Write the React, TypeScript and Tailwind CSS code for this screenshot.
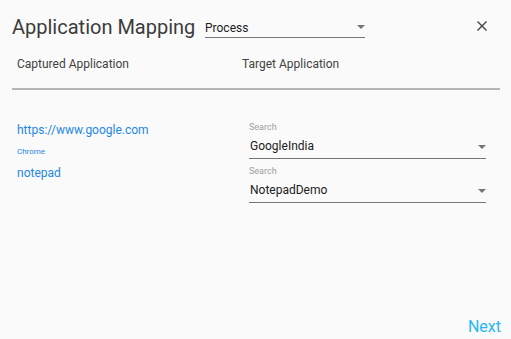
import React from "react";

function Caret() {
  return (
    <svg width="8" height="4" viewBox="0 0 8 4" className="block">
      <path d="M0 0h8L4 4z" fill="#757575" />
    </svg>
  );
}

function SearchField({ value }: { value: string }) {
  return (
    <div className="flex flex-col">
      <span className="text-[9px] leading-none h-[9px] text-[#9e9e9e]">Search</span>
      <div className="mt-[8px] pb-[6px] border-b border-[#757575] flex items-center justify-between pl-px">
        <span className="text-[12px] leading-none h-[12px] text-[#212121]">{value}</span>
        <span className="mt-[1px]">
          <Caret />
        </span>
      </div>
    </div>
  );
}

export default function App() {
  // mapping rows: captured on the left, dropdown target on the right
  const rows = [
    { url: "https://www.google.com", browser: "Chrome", target: "GoogleIndia" },
    { url: "notepad", browser: "", target: "NotepadDemo" },
  ];

  return (
    <div
      className="w-[511px] h-[339px] bg-[#fafafa] flex flex-col overflow-hidden"
      style={{ fontFamily: "Roboto, 'Noto Sans', sans-serif" }}
    >
      <div className="flex items-start pl-3 pt-[17px]">
        <div className="w-[193px] text-[20px] leading-none h-[20px] text-[#3c3c3c]">
          Application Mapping
        </div>
        <div className="mt-[5px] w-[160px] h-[16px] border-b border-[#757575] flex items-start justify-between">
          <span className="text-[12px] leading-none text-[#212121]">Process</span>
          <span className="mt-[3px]">
            <Caret />
          </span>
        </div>
        <button className="ml-[111px] mt-[3px] w-[12px] h-[12px] flex items-center justify-center">
          <svg width="10" height="10" viewBox="0 0 10 10">
            <path d="M0.5 0.5L9.5 9.5M9.5 0.5L0.5 9.5" stroke="#424242" strokeWidth="1.4" />
          </svg>
        </button>
      </div>

      <div className="flex mt-[20px] text-[12px] leading-none h-[12px] text-[#424242]">
        <span className="pl-[17px] w-[242px]">Captured Application</span>
        <span>Target Application</span>
      </div>

      <div className="mt-[18px] ml-3 w-[488px] h-[2px] bg-[#b5b5b5]" />

      <div className="flex mt-[33px]">
        <div className="pl-[17px] pt-px w-[249px] flex flex-col text-[#1e88e5]">
          <span className="text-[12px] leading-none h-[12px]">{rows[0].url}</span>
          <span className="mt-[12px] text-[8px] leading-none h-[8px]">{rows[0].browser}</span>
          <span className="mt-[11px] text-[12px] leading-none h-[12px]">{rows[1].url}</span>
        </div>
        <div className="w-[237px] flex flex-col gap-[8px]">
          {rows.map((r) => (
            <SearchField key={r.target} value={r.target} />
          ))}
        </div>
      </div>

      <div className="mt-auto flex justify-end pr-[10px] pb-[4px]">
        <button className="text-[16px] leading-none h-[16px] text-[#29b6f6]">Next</button>
      </div>
    </div>
  );
}
